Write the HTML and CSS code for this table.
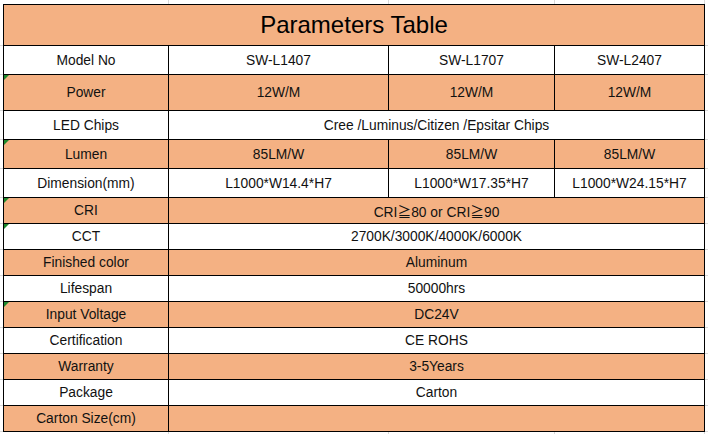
FILE: index.html
```html
<!DOCTYPE html>
<html>
<head>
<meta charset="utf-8">
<title>Parameters Table</title>
<link rel="stylesheet" href="styles.css">
</head>
<body>
<div class="sheet">
  <div class="corner"></div><div class="gt"></div><div class="gt"></div><div class="gt"></div><div class="gt"></div><div class="corner"></div>

  <div class="gl"></div><div class="cell title o">Parameters Table</div><div class="gr"></div>

  <div class="gl"></div><div class="cell head">Model No</div><div class="cell">SW-L1407</div><div class="cell">SW-L1707</div><div class="cell">SW-L2407</div><div class="gr"></div>

  <div class="gl"></div><div class="cell head o flag">Power</div><div class="cell o">12W/M</div><div class="cell o">12W/M</div><div class="cell o">12W/M</div><div class="gr"></div>

  <div class="gl"></div><div class="cell head">LED Chips</div><div class="cell span3">Cree /Luminus/Citizen /Epsitar Chips</div><div class="gr"></div>

  <div class="gl"></div><div class="cell head o flag">Lumen</div><div class="cell o">85LM/W</div><div class="cell o">85LM/W</div><div class="cell o">85LM/W</div><div class="gr"></div>

  <div class="gl"></div><div class="cell head">Dimension(mm)</div><div class="cell">L1000*W14.4*H7</div><div class="cell">L1000*W17.35*H7</div><div class="cell">L1000*W24.15*H7</div><div class="gr"></div>

  <div class="gl"></div><div class="cell head o flag">CRI</div><div class="cell span3 o">CRI≧80 or CRI≧90</div><div class="gr"></div>

  <div class="gl"></div><div class="cell head flag">CCT</div><div class="cell span3">2700K/3000K/4000K/6000K</div><div class="gr"></div>

  <div class="gl"></div><div class="cell head o">Finished color</div><div class="cell span3 o">Aluminum</div><div class="gr"></div>

  <div class="gl"></div><div class="cell head">Lifespan</div><div class="cell span3">50000hrs</div><div class="gr"></div>

  <div class="gl"></div><div class="cell head o flag">Input Voltage</div><div class="cell span3 o">DC24V</div><div class="gr"></div>

  <div class="gl"></div><div class="cell head">Certification</div><div class="cell span3">CE ROHS</div><div class="gr"></div>

  <div class="gl"></div><div class="cell head o">Warranty</div><div class="cell span3 o">3-5Years</div><div class="gr"></div>

  <div class="gl"></div><div class="cell head">Package</div><div class="cell span3">Carton</div><div class="gr"></div>

  <div class="gl"></div><div class="cell head o">Carton Size(cm)</div><div class="cell span3 o"></div><div class="gr"></div>

  <div class="corner"></div><div class="gt"></div><div class="gt"></div><div class="gt"></div><div class="gt"></div><div class="corner"></div>
</div>
</body>
</html>
```

FILE: styles.css
```css
* { box-sizing: border-box; }

html, body {
  margin: 0;
  padding: 0;
  background: #ffffff;
}

body {
  font-family: "Liberation Sans", Arial, "Noto Sans CJK SC", sans-serif;
  color: #000;
  width: 708px;
  height: 434px;
  overflow: hidden;
}

.sheet {
  display: grid;
  grid-template-columns: 3px 166px 220px 166px 150px 3px;
  grid-template-rows: 4px 42px 29px 36px 29px 29px 29px repeat(9, 26px) 2px;
  width: 708px;
  height: 434px;
}

.corner { }

.gt {
  border-right: 1px solid #d9d9d9;
}

.gl, .gr {
  border-bottom: 1px solid #d9d9d9;
}

.cell {
  position: relative;
  display: flex;
  align-items: center;
  justify-content: center;
  border-right: 1px solid #000;
  border-bottom: 1px solid #000;
  font-size: 13.8px;
  white-space: nowrap;
  background: #fff;
  color: #111;
}

.o {
  background: #f4b183;
}

.head {
  border-left: 1px solid #000;
}

.span3 {
  grid-column: span 3;
}

.title {
  grid-column: span 4;
  border-top: 1px solid #000;
  border-left: 1px solid #000;
  font-size: 24px;
  color: #000;
}

.flag::before {
  content: "";
  position: absolute;
  left: 0;
  top: 0;
  width: 0;
  height: 0;
  border-top: 5px solid #1e8a2e;
  border-right: 5px solid transparent;
}
```
